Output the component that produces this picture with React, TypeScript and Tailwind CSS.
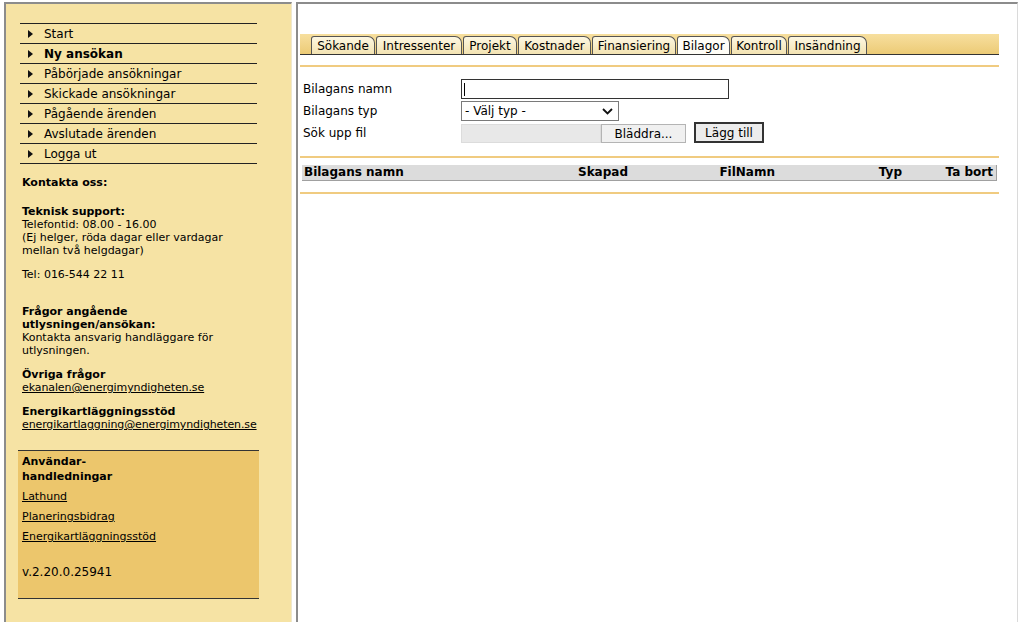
import React from "react";

const menu = [
  { label: "Start", bold: false },
  { label: "Ny ansökan", bold: true },
  { label: "Påbörjade ansökningar", bold: false },
  { label: "Skickade ansökningar", bold: false },
  { label: "Pågående ärenden", bold: false },
  { label: "Avslutade ärenden", bold: false },
  { label: "Logga ut", bold: false },
];

const tabs: { label: string; w: string }[] = [
  { label: "Sökande", w: "w-[64px]" },
  { label: "Intressenter", w: "w-[86px]" },
  { label: "Projekt", w: "w-[54px]" },
  { label: "Kostnader", w: "w-[73px]" },
  { label: "Finansiering", w: "w-[84px]" },
  { label: "Bilagor", w: "w-[53px]" },
  { label: "Kontroll", w: "w-[56px]" },
  { label: "Insändning", w: "w-[79px]" },
];

function Arrow() {
  return (
    <svg width="5" height="8" viewBox="0 0 5 8" className="shrink-0">
      <polygon points="0,0 5,4 0,8" fill="#111" />
    </svg>
  );
}

function Sidebar() {
  return (
    <div className="w-[288px] h-[700px] shrink-0 bg-[#f6e3a4] border-t-2 border-l-2 border-[#8c8c8c] border-r border-r-[#efe8cf] text-black">
      <div className="ml-[14px] mt-[19px] w-[237px] border-t border-[#222]">
        {menu.map((m) => (
          <div
            key={m.label}
            className="h-[20px] border-b border-[#222] flex items-center pl-[8px] gap-[11px]"
          >
            <Arrow />
            <span className={"text-[12px] leading-[16px] " + (m.bold ? "font-bold" : "")}>
              {m.label}
            </span>
          </div>
        ))}
      </div>

      <div className="pl-[16px] text-[11px] leading-[13px]">
        <div className="mt-[12px] font-bold">Kontakta oss:</div>
        <div className="mt-[16px]">
          <div className="font-bold">Teknisk support:</div>
          <div>Telefontid: 08.00 - 16.00</div>
          <div>(Ej helger, röda dagar eller vardagar</div>
          <div>mellan två helgdagar)</div>
        </div>
        <div className="mt-[11px]">Tel: 016-544 22 11</div>
        <div className="mt-[24px]">
          <div className="font-bold">Frågor angående</div>
          <div className="font-bold">utlysningen/ansökan:</div>
          <div>Kontakta ansvarig handläggare för</div>
          <div>utlysningen.</div>
        </div>
        <div className="mt-[11px]">
          <div className="font-bold">Övriga frågor</div>
          <div className="underline tracking-[-0.1px]">ekanalen@energimyndigheten.se</div>
        </div>
        <div className="mt-[11px]">
          <div className="font-bold">Energikartläggningsstöd</div>
          <div className="underline tracking-[-0.12px]">energikartlaggning@energimyndigheten.se</div>
        </div>
      </div>

      <div className="ml-[12px] mt-[19px] w-[241px] h-[149px] bg-[#ecc66c] border-t border-b border-[#333] pl-[4px] pt-[3px]">
        <div className="text-[11px] leading-[15px] font-bold">
          <div>Användar-</div>
          <div>handledningar</div>
        </div>
        <div className="mt-[3px] text-[11px] leading-[20px]">
          <div className="underline">Lathund</div>
          <div className="underline">Planeringsbidrag</div>
          <div className="underline">Energikartläggningsstöd</div>
        </div>
        <div className="mt-[18px] text-[12px] leading-[15px]">v.2.20.0.25941</div>
      </div>
    </div>
  );
}

function Separator({ className }: { className: string }) {
  return <div className={"h-[2px] bg-[#f0cb80] " + className} />;
}

function MainPanel() {
  return (
    <div className="w-[722px] h-[700px] shrink-0 bg-white border-t-2 border-l-2 border-[#8c8c8c] border-r border-r-[#dadada] text-black">
      <div className="ml-[2px] mt-[30px] w-[699px]">
        {/* Tab bar */}
        <div className="h-[21px] flex items-end pl-[11px] gap-[1px] border-b border-[#333] bg-gradient-to-b from-[#f7df9e] to-[#eccb76]">
          {tabs.map((t) => (
            <div
              key={t.label}
              className={
                t.w +
                " h-[18px] flex items-center justify-center whitespace-nowrap border-t border-l border-r border-[#555] rounded-tl-[3px] rounded-tr-[7px] text-[12px] leading-[16px] " +
                (t.label === "Bilagor"
                  ? "bg-[#fffdf6]"
                  : "bg-gradient-to-b from-[#fdf7e2] to-[#f3e3b2]")
              }
            >
              {t.label}
            </div>
          ))}
        </div>

        <Separator className="mt-[10px]" />

        {/* Form */}
        <div className="mt-[11px] pl-[3px] text-[12px] leading-[16px]">
          <div className="h-[22px] flex items-start">
            <div className="w-[158px] h-[22px] flex items-center">Bilagans namn</div>
            <div className="mt-[1px] w-[268px] h-[20px] border border-[#333] bg-white flex items-center">
              <div className="ml-[2px] w-[1px] h-[13px] bg-black" />
            </div>
          </div>
          <div className="h-[22px] flex items-start">
            <div className="w-[158px] h-[22px] flex items-center">Bilagans typ</div>
            <div className="mt-[1px] w-[158px] h-[20px] border border-[#7a7a7a] bg-white flex items-center justify-between pl-[3px] pr-[5px]">
              <span>- Välj typ -</span>
              <svg width="11" height="7" viewBox="0 0 11 7">
                <polyline points="1,1 5.5,5.5 10,1" fill="none" stroke="#111" strokeWidth="1.8" />
              </svg>
            </div>
          </div>
          <div className="h-[22px] flex items-start">
            <div className="w-[158px] h-[22px] flex items-center">Sök upp fil</div>
            <div className="mt-[2px] w-[140px] h-[19px] bg-[#e8e8e8] border border-[#dcdcdc]" />
            <div className="mt-[2px] w-[85px] h-[19px] bg-[#f0f0f0] border border-[#b4b4b4] flex items-center justify-center">
              Bläddra...
            </div>
            <div className="ml-[8px] w-[70px] h-[21px] bg-[#ececec] border-2 border-[#333] flex items-center justify-center">
              Lägg till
            </div>
          </div>
        </div>

        <Separator className="mt-[12px]" />

        {/* Table header */}
        <div className="mt-[7px] ml-[2px] w-[695px] h-[16px] bg-[#dcdcdc] border-b border-r border-[#a0a0a0] flex items-center text-[12px] leading-[15px] font-bold">
          <div className="w-[200px] pl-[2px]">Bilagans namn</div>
          <div className="w-[126px] text-right">Skapad</div>
          <div className="w-[147px] text-right">FilNamn</div>
          <div className="w-[127px] text-right">Typ</div>
          <div className="w-[94px] text-right pr-[3px]">Ta bort</div>
        </div>

        <Separator className="mt-[11px]" />
      </div>
    </div>
  );
}

export default function App() {
  return (
    <div className="w-[1024px] h-[622px] overflow-hidden bg-white flex pt-[2px] pl-[4px] gap-[4px] font-['DejaVu_Sans','Verdana',sans-serif]">
      <Sidebar />
      <MainPanel />
    </div>
  );
}
